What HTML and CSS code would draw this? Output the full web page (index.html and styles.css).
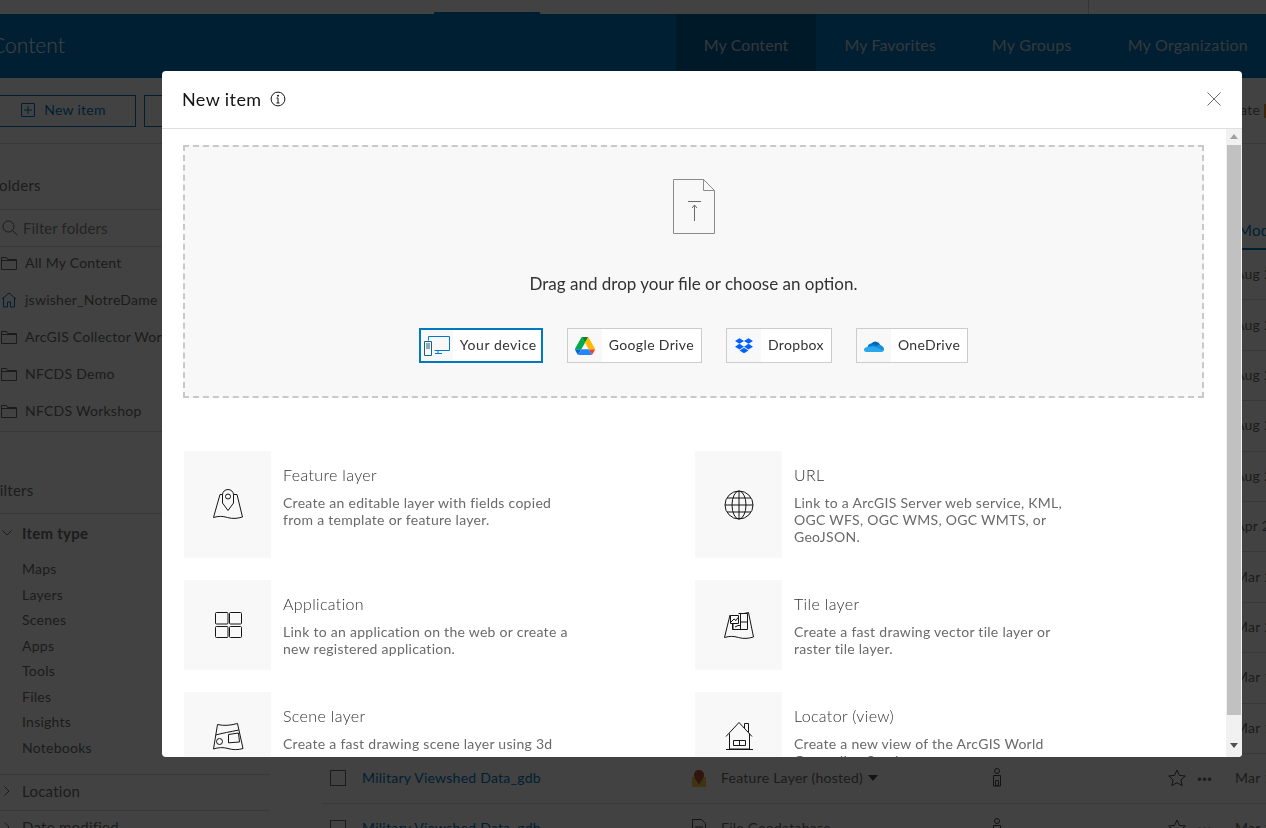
FILE: index.html
```html
<!DOCTYPE html>
<html>
  <head>
    <title>New item</title>
    <link rel="stylesheet" href="styles.css">
  </head>
  <body>
    <div class="page">
      <div class="topbar"><span class="topbar-tab"></span><span class="topbar-line"></span></div>

      <div class="band">
        <div class="band-title">Content</div>
        <div class="band-tabs">
          <span class="band-tab active tight">My Content</span>
          <span class="band-tab tight">My Favorites</span>
          <span class="band-tab">My Groups</span>
          <span class="band-tab">My Organization</span>
        </div>
      </div>

      <div class="toolbar">
        <div class="tool-btn">
          <svg width="14" height="14" viewBox="0 0 14 14" fill="none" stroke="#007ac2"><path d="M.5.5h13v13H.5zM7 3v8M3 7h8"/></svg>
          New item
        </div>
        <div class="tool-btn second"></div>
        <div class="tool-right">Update <span class="orange"></span></div>
      </div>

      <div class="main">
        <div class="sidebar">
          <div class="side-head">Folders</div>
          <div class="side-filter">
            <svg width="16" height="16" viewBox="0 0 16 16" fill="none" stroke="#6a6a6a"><circle cx="6.500" cy="6.500" r="5.500"/><path d="M10.500 10.500l5 5"/></svg>
            Filter folders
          </div>
          <div class="folders">
            <div class="folder"><svg class="folder-icon" width="16" height="14" viewBox="0 0 16 14" fill="none" stroke="#6a6a6a"><path d="M.5 13.500v-12h5l1 2h9v10zM.5 4.500h15"/></svg>All My Content</div>
            <div class="folder"><svg class="folder-icon" width="16" height="16" viewBox="0 0 16 16" fill="none" stroke="#007ac2"><path d="M1 7l7-6 7 6M2.500 6v9h4v-5h3v5h4V6"/></svg>jswisher_NotreDame</div>
            <div class="folder"><svg class="folder-icon" width="16" height="14" viewBox="0 0 16 14" fill="none" stroke="#6a6a6a"><path d="M.5 13.500v-12h5l1 2h9v10zM.5 4.500h15"/></svg>ArcGIS Collector Workshop</div>
            <div class="folder"><svg class="folder-icon" width="16" height="14" viewBox="0 0 16 14" fill="none" stroke="#6a6a6a"><path d="M.5 13.500v-12h5l1 2h9v10zM.5 4.500h15"/></svg>NFCDS Demo</div>
            <div class="folder"><svg class="folder-icon" width="16" height="14" viewBox="0 0 16 14" fill="none" stroke="#6a6a6a"><path d="M.5 13.500v-12h5l1 2h9v10zM.5 4.500h15"/></svg>NFCDS Workshop</div>
          </div>
          <div class="side-head filters">Filters</div>
          <div class="filter-group">
            <div class="filter-title"><svg width="10" height="6" viewBox="0 0 10 6" fill="none" stroke="#6a6a6a"><path d="M.5.500L5 5 9.500.5"/></svg>Item type</div>
            <div class="filter-item">Maps</div>
            <div class="filter-item">Layers</div>
            <div class="filter-item">Scenes</div>
            <div class="filter-item">Apps</div>
            <div class="filter-item">Tools</div>
            <div class="filter-item">Files</div>
            <div class="filter-item">Insights</div>
            <div class="filter-item">Notebooks</div>
          </div>
          <div class="filter-closed"><svg width="6" height="10" viewBox="0 0 6 10" fill="none" stroke="#6a6a6a"><path d="M.5.500L5 5 .5 9.500"/></svg>Location</div>
          <div class="filter-closed"><svg width="6" height="10" viewBox="0 0 6 10" fill="none" stroke="#6a6a6a"><path d="M.5.500L5 5 .5 9.500"/></svg>Date modified</div>
        </div>

        <div class="table">
          <div class="table-head"><span class="date sorted">Modified</span></div>
          <div class="row"><span class="date">Aug 2</span></div>
          <div class="row"><span class="date">Aug 2</span></div>
          <div class="row"><span class="date">Aug 2</span></div>
          <div class="row"><span class="date">Aug 2</span></div>
          <div class="row"><span class="date">Aug 2</span></div>
          <div class="row"><span class="date">Apr 2</span></div>
          <div class="row"><span class="date">Mar 2</span></div>
          <div class="row"><span class="date">Mar 2</span></div>
          <div class="row"><span class="date">Mar 1</span></div>
          <div class="row"><span class="date">Mar 1</span></div>
          <div class="row">
            <span class="check"></span>
            <a class="row-name">Military Viewshed Data_gdb</a>
            <span class="row-type">
              <svg width="16" height="18" viewBox="0 0 16 18"><path d="M1 8h14v10H1z" fill="#f4c542"/><path d="M8 1c3 0 5 2 5 5 0 3-3 6-5 10-2-4-5-7-5-10 0-3 2-5 5-5z" fill="#b5553a"/></svg>
              Feature Layer (hosted) <i class="caret"></i>
            </span>
            <svg class="owner" width="12" height="20" viewBox="0 0 12 20" fill="none" stroke="#4a4a4a"><circle cx="6" cy="3" r="2.500"/><path d="M2.500 7.500h7V18h-7z"/><path d="M4.500 12.500h3v5h-3z"/></svg>
            <svg class="star" width="18" height="18" viewBox="0 0 18 18" fill="none" stroke="#4a4a4a"><path d="M9 1l2.400 5.400 5.900.6-4.400 3.900 1.300 5.800L9 13.700l-5.200 3 1.300-5.800L.7 7l5.900-.6z"/></svg>
            <span class="dots">&middot;&middot;&middot;</span>
            <span class="date">Mar 1</span>
          </div>
          <div class="row">
            <span class="check"></span>
            <a class="row-name">Military Viewshed Data_gdb</a>
            <span class="row-type">
              <svg width="16" height="18" viewBox="0 0 16 18" fill="none" stroke="#4a4a4a"><path d="M1.500.5h9l4 4v13h-13zM4 8h8M4 11h8M4 14h8"/></svg>
              File Geodatabase
            </span>
            <svg class="owner" width="12" height="20" viewBox="0 0 12 20" fill="none" stroke="#4a4a4a"><circle cx="6" cy="3" r="2.500"/><path d="M2.500 7.500h7V18h-7z"/></svg>
            <svg class="star" width="18" height="18" viewBox="0 0 18 18" fill="none" stroke="#4a4a4a"><path d="M9 1l2.400 5.400 5.900.6-4.400 3.900 1.300 5.800L9 13.700l-5.200 3 1.300-5.800L.7 7l5.900-.6z"/></svg>
            <span class="dots">&middot;&middot;&middot;</span>
            <span class="date">Mar 1</span>
          </div>
        </div>
      </div>
    </div>

    <div class="scrim"></div>

    <div class="modal">
      <div class="modal-head">
        <span class="modal-title">New item</span>
        <svg class="info" width="16" height="16" viewBox="0 0 16 16" fill="none" stroke="#151515"><circle cx="8" cy="8" r="6.900"/><path d="M8 7v5M6.500 7H8M6.500 12h3"/><circle cx="8" cy="4.700" r=".6" fill="#151515"/></svg>
        <svg class="close" width="14" height="14" viewBox="0 0 14 14" fill="none" stroke="#6a6a6a"><path d="M.5.500l13 13M13.500.5l-13 13"/></svg>
      </div>
      <div class="modal-body">
        <div class="modal-scroll">
          <div class="dropzone">
            <svg class="file-icon" width="42" height="55" viewBox="0 0 42 55" fill="none" stroke="#8a8a8a"><path d="M.5.500h30l11 11v43H.5zM30.500.5v11h11"/><path d="M15 22.500h13M21.500 26v16M19 29l2.500-3 2.500 3" stroke="#6a6a6a"/></svg>
            <div class="drop-text">Drag and drop your file or choose an option.</div>
            <div class="sources">
              <div class="source selected">
                <span class="source-icon">
                  <svg width="26" height="20" viewBox="0 0 26 20" fill="none" stroke="#007ac2"><path d="M4.500 4.500v-4h21v14h-15M14 14.500v3M11 17.500h7"/><path d="M.5 5.500h7v14h-7zM2 8h4M2 10h4M2 12h4" stroke="#1a5f8a"/></svg>
                </span>
                <span class="source-name">Your device</span>
              </div>
              <div class="source">
                <span class="source-icon">
                  <svg width="20" height="18" viewBox="0 0 87.300 78"><path d="M6.600 66.850l3.850 6.650c.8 1.400 1.950 2.500 3.300 3.300L27.500 53H0c0 1.550.4 3.100 1.200 4.500z" fill="#0066da"/><path d="M43.650 25L29.900 1.200c-1.350.8-2.500 1.900-3.300 3.300L1.200 48.500A9.060 9.060 0 0 0 0 53h27.500z" fill="#00ac47"/><path d="M73.550 76.800c1.350-.8 2.500-1.900 3.300-3.300l1.600-2.750 7.650-13.250c.8-1.400 1.200-2.950 1.200-4.500H59.800l5.850 11.500z" fill="#ea4335"/><path d="M43.650 25L57.400 1.200C56.050.4 54.500 0 52.900 0H34.400c-1.600 0-3.150.45-4.500 1.200z" fill="#00832d"/><path d="M59.800 53H27.500L13.750 76.800c1.350.8 2.900 1.200 4.500 1.200h50.800c1.600 0 3.150-.45 4.500-1.200z" fill="#2684fc"/><path d="M73.400 26.500l-12.700-22c-.8-1.400-1.950-2.500-3.300-3.300L43.650 25 59.800 53h27.450c0-1.550-.4-3.100-1.200-4.500z" fill="#ffba00"/></svg>
                </span>
                <span class="source-name">Google Drive</span>
              </div>
              <div class="source">
                <span class="source-icon">
                  <svg width="18" height="16" viewBox="0 0 24 21" fill="#0061ff"><path d="M6 0l6 3.800-6 3.800-6-3.800zM18 0l6 3.800-6 3.800-6-3.800zM0 11.400l6-3.800 6 3.800-6 3.800zM18 7.600l6 3.800-6 3.800-6-3.800zM6 16.500l6-3.800 6 3.800-6 3.800z"/></svg>
                </span>
                <span class="source-name">Dropbox</span>
              </div>
              <div class="source">
                <span class="source-icon">
                  <svg width="20" height="13" viewBox="0 0 20 13"><path d="M7.500 4.500a5 5 0 0 1 8.700 1.500L11 12 5 7z" fill="#0364b8"/><path d="M7.500 4.500A4 4 0 0 0 3.600 8L9 13l6-6z" fill="#0078d4"/><path d="M14 5.800c1-.2 2-.1 2.800.4 2 .7 3.200 2.300 3.200 4 0 .7-.2 1.300-.5 1.800L11 9z" fill="#1490df"/><path d="M3.600 8C1.500 8 0 9.200 0 10.700 0 12 1 13 2.500 13H17c1.200 0 2-.4 2.500-1L10 7z" fill="#28a8ea"/></svg>
                </span>
                <span class="source-name">OneDrive</span>
              </div>
            </div>
          </div>

          <div class="item-grid">
            <div class="item">
              <div class="item-tile">
                <svg width="32" height="32" viewBox="0 0 32 32" fill="none" stroke="#151515"><path d="M10.500 5.500H8L1.500 28.500c5-1.500 9-1.500 14 0s10 1 15-.5L25 5.500h-3.500"/><path d="M16 .5c-3 0-5.500 2.300-5.500 5v8.500l5.500 7.500 5.500-7.500V5.500c0-2.700-2.500-5-5.500-5z"/><circle cx="16" cy="7.500" r="2.500"/></svg>
              </div>
              <div class="item-text">
                <div class="item-title">Feature layer</div>
                <div class="item-desc">Create an editable layer with fields copied from a template or feature layer.</div>
              </div>
            </div>
            <div class="item">
              <div class="item-tile">
                <svg width="32" height="32" viewBox="0 0 32 32" fill="none" stroke="#151515"><circle cx="16" cy="16" r="14"/><ellipse cx="16" cy="16" rx="7" ry="14"/><path d="M16 2v28M2 16h28M4 9h24M4 23h24"/></svg>
              </div>
              <div class="item-text">
                <div class="item-title">URL</div>
                <div class="item-desc">Link to a ArcGIS Server web service, KML, OGC WFS, OGC WMS, OGC WMTS, or GeoJSON.</div>
              </div>
            </div>
            <div class="item">
              <div class="item-tile">
                <svg width="32" height="32" viewBox="0 0 32 32" fill="none" stroke="#151515"><rect x="3.500" y="3.500" width="12.500" height="11.500" rx="1"/><rect x="17.500" y="3.500" width="12" height="11.500" rx="1"/><rect x="3.500" y="17.500" width="12.500" height="11" rx="1"/><rect x="17.500" y="17.500" width="12" height="11" rx="1"/></svg>
              </div>
              <div class="item-text">
                <div class="item-title">Application</div>
                <div class="item-desc">Link to an application on the web or create a new registered application.</div>
              </div>
            </div>
            <div class="item">
              <div class="item-tile">
                <svg width="32" height="32" viewBox="0 0 32 32" fill="none" stroke="#151515"><path d="M7 6L1.500 28.500c5-1.500 9-1.500 14 0s10 1 15-.5L25.500 3.500 21 4.500"/><path d="M7.500 6.500h8v8h-8zM8 13l3-3 2 1.500 2-3M15.500 4.500h9v16h-15v-6M17.500 5v15M10 14.500v6M17.500 13h7M12 18l3-1.500h2"/></svg>
              </div>
              <div class="item-text">
                <div class="item-title">Tile layer</div>
                <div class="item-desc">Create a fast drawing vector tile layer or raster tile layer.</div>
              </div>
            </div>
            <div class="item">
              <div class="item-tile">
                <svg width="32" height="32" viewBox="0 0 32 32" fill="none" stroke="#151515"><path d="M5.500 3.500c7 1.500 12 1 20-1L31 27.500c-5 1.500-10 1.500-15 0s-10-1-14.500.5z"/><path d="M3.700 14c7-2 14-3 23-5"/><circle cx="7.500" cy="20.500" r="3"/><path d="M16.500 13.500l10-1.500 1 9-11 .8z"/></svg>
              </div>
              <div class="item-text">
                <div class="item-title">Scene layer</div>
                <div class="item-desc">Create a fast drawing scene layer using 3d content.</div>
              </div>
            </div>
            <div class="item">
              <div class="item-tile">
                <svg width="32" height="32" viewBox="0 0 32 32" fill="none" stroke="#151515"><path d="M3 15.500L16 1.500l13 14M6.500 12.500v15.500h20V12.500M21.500 7V2.500h4v9M3 28.500h27M10.500 19.500h12v5h-12zM16.500 19.500v5"/></svg>
              </div>
              <div class="item-text">
                <div class="item-title">Locator (view)</div>
                <div class="item-desc">Create a new view of the ArcGIS World Geocoding Service.</div>
              </div>
            </div>
          </div>
        </div>
        <div class="scrollbar">
          <i class="arrow up"></i>
          <div class="thumb"></div>
          <i class="arrow down"></i>
        </div>
      </div>
    </div>
  </body>
</html>
```

FILE: styles.css
```css
html, body {
    margin: 0;
    padding: 0;
    height: 100%;
    overflow: hidden;
}

body {
    font-family: "Lato", "Open Sans", sans-serif;
    font-size: 14px;
    letter-spacing: .25px;
    color: #4a4a4a;
    background: #fff;
}

/* the app behind the dialog sits scrolled 9px to the left */
.page {
    width: 1300px;
    height: 828px;
    margin-left: -9px;
    overflow: hidden;
    color: #6e6e6e;
}

.topbar {
    height: 14px;
    display: flex;
    justify-content: flex-end;
}

.topbar-tab {
    width: 106px;
    height: 2px;
    margin: 12px 548px 0 0;
    background: #007ac2;
}

.topbar-line {
    width: 1px;
    margin-right: 202px;
    background: #ccc;
}

.band {
    height: 64px;
    padding: 0 15px 0 0;
    display: flex;
    justify-content: space-between;
    background: #007ac2;
    color: #fff;
}

.band-title {
    font-size: 21px;
    font-weight: 300;
    letter-spacing: 0;
    line-height: 62px;
}

.band-tabs {
    display: flex;
}

.band-tab {
    padding: 0 28px;
    font-size: 16px;
    line-height: 62px;
    color: #c8d6df;
}

.band-tab.tight {
    letter-spacing: .1px;
}

.band-tab.active {
    background: #00619b;
}

.toolbar {
    height: 66px;
    padding-top: 17px;
    box-sizing: border-box;
    display: flex;
    gap: 8px;
    border-bottom: 1px solid #ddd;
}

.tool-btn {
    width: 145px;
    height: 32px;
    padding-bottom: 3px;
    box-sizing: border-box;
    display: flex;
    align-items: center;
    justify-content: center;
    gap: 9px;
    border: 1px solid #007ac2;
    color: #007ac2;
}

.tool-btn.second {
    width: 60px;
}

.tool-right {
    margin: 0 21px 0 auto;
    line-height: 30px;
}

.orange {
    display: inline-block;
    width: 6px;
    height: 14px;
    vertical-align: middle;
    background: #e8912d;
}

.main {
    display: flex;
}

.sidebar {
    width: 279px;
    margin-right: 52px;
    flex: none;
}

.side-head {
    height: 66px;
    line-height: 82px;
    font-size: 15px;
    border-bottom: 1px solid #ddd;
    box-sizing: border-box;
}

.side-filter {
    height: 35px;
    padding: 0 0 1px 11px;
    box-sizing: content-box;
    display: flex;
    align-items: center;
    gap: 5px;
    font-size: 15px;
    letter-spacing: .1px;
    color: #8a8a8a;
    border-bottom: 1px solid #ddd;
    margin-bottom: -1px;
}

.folders {
    border-bottom: 1px solid #ddd;
}

.folder {
    height: 37px;
    padding: 0 0 4px 10px;
    box-sizing: border-box;
    display: flex;
    align-items: center;
    gap: 8px;
    white-space: nowrap;
}

.side-head.filters {
    height: 82px;
    line-height: 116px;
}

.filter-group {
    padding-bottom: 14px;
    border-bottom: 1px solid #ddd;
}

.filter-title {
    height: 38px;
    margin-bottom: 4px;
    padding-left: 11px;
    display: flex;
    align-items: center;
    gap: 10px;
    font-size: 15px;
    font-weight: 700;
}

.filter-item {
    padding-left: 31px;
    line-height: 25.500px;
}

.filter-closed {
    height: 36px;
    padding: 0 0 3px 13px;
    box-sizing: border-box;
    display: flex;
    align-items: center;
    gap: 12px;
    font-size: 15px;
    border-bottom: 1px solid #ddd;
}

.table {
    flex: 1;
    min-width: 0;
}

.table-head {
    height: 106px;
    padding-left: 912px;
    box-sizing: border-box;
    line-height: 172px;
    font-size: 15px;
    color: #007ac2;
}

.sorted {
    display: block;
    height: 106px;
    margin-left: 4px;
    border-bottom: 2px solid #007ac2;
    box-sizing: border-box;
    white-space: nowrap;
    overflow: hidden;
}

.row {
    height: 50.400px;
    box-sizing: border-box;
    display: flex;
    align-items: center;
    border-bottom: 1px solid #ddd;
    padding: 0 0 2px 8px;
}

.row .date {
    margin-left: auto;
    margin-right: 22px;
    width: 34px;
    white-space: nowrap;
}

.check {
    width: 14px;
    height: 14px;
    border: 1px solid #6a6a6a;
    margin-right: 16px;
    flex: none;
}

.row-name {
    width: 329px;
    color: #007ac2;
    flex: none;
}

.row-type {
    width: 300px;
    display: flex;
    align-items: center;
    gap: 14px;
    flex: none;
    white-space: nowrap;
}

.caret {
    display: inline-block;
    margin-left: -9px;
    border: 5px solid transparent;
    border-top: 6px solid #4a4a4a;
    border-bottom: 0;
}

.owner {
    flex: none;
}

.star {
    margin-left: 165px;
    flex: none;
}

.dots {
    margin-left: 11px;
    font-size: 18px;
    font-weight: 700;
    letter-spacing: 0;
}

.scrim {
    position: fixed;
    inset: 0;
    background: rgba(0, 0, 0, .74);
}

.modal {
    position: fixed;
    left: 162px;
    top: 71px;
    width: 1080px;
    height: 686px;
    display: flex;
    flex-direction: column;
    background: #fff;
    border-radius: 4px;
    overflow: hidden;
}

.modal-head {
    height: 58px;
    padding: 0 21px 2px 20px;
    box-sizing: border-box;
    display: flex;
    align-items: center;
    flex: none;
    border-bottom: 1px solid #dfdfdf;
}

.modal-title {
    font-size: 18px;
    letter-spacing: .4px;
    color: #151515;
}

.info {
    margin-left: 8px;
}

.close {
    margin-left: auto;
}

.modal-body {
    flex: 1;
    min-height: 0;
    display: flex;
}

.modal-scroll {
    flex: 1;
    min-width: 0;
    padding: 16px 0 0 21px;
    overflow: hidden;
}

.dropzone {
    width: 1021px;
    height: 253px;
    box-sizing: border-box;
    padding-top: 32px;
    display: flex;
    flex-direction: column;
    align-items: center;
    background: #f8f8f8;
    border: 2px dashed #c9c9c9;
}

.file-icon {
    display: block;
}

.drop-text {
    margin-top: 39px;
    font-size: 17px;
    letter-spacing: 0;
    line-height: 22px;
    color: #323232;
}

.sources {
    margin-top: 33px;
    display: flex;
    gap: 24px;
}

.source {
    height: 35px;
    box-sizing: border-box;
    display: flex;
    align-items: center;
    background: #fff;
    border: 1px solid #ccc;
}

.source.selected {
    width: 124px;
    border: 2px solid #0079c1;
}

.source-icon {
    width: 34px;
    height: 100%;
    display: flex;
    align-items: center;
    justify-content: center;
    flex: none;
    background: #f8f8f8;
}

.source.selected .source-icon {
    width: 32px;
}

.source-name {
    padding: 0 7px 3px 7px;
    letter-spacing: .35px;
    color: #323232;
    white-space: nowrap;
}

.source.selected .source-name {
    padding-right: 0;
    letter-spacing: .55px;
}

.item-grid {
    margin: 53px 0 0 1px;
    display: grid;
    grid-template-columns: 511px 511px;
    row-gap: 22px;
}

.item {
    display: flex;
    gap: 12px;
}

.item-tile {
    width: 87px;
    display: flex;
    align-items: center;
    justify-content: center;
    background: #f8f8f8;
    flex: none;
}

.item-text {
    width: 290px;
    padding: 12px 0 13px;
}

.item-title {
    font-size: 16px;
    font-weight: 300;
    letter-spacing: .35px;
    line-height: 24px;
    margin-bottom: 7px;
    color: #323232;
}

.item-desc {
    line-height: 17px;
    letter-spacing: .28px;
    color: #6a6a6a;
}

.scrollbar {
    width: 16px;
    display: flex;
    flex-direction: column;
    align-items: center;
    flex: none;
    background: #f1f1f1;
}

.arrow {
    width: 0;
    height: 0;
    margin: 5px 0 6px;
    border: 4px solid transparent;
}

.arrow.up {
    border-top: 0;
    border-bottom: 5px solid #a0a0a0;
}

.arrow.down {
    margin-top: 28px;
    border-bottom: 0;
    border-top: 5px solid #505050;
}

.thumb {
    width: 14px;
    height: 570px;
    background: #c1c1c1;
}
```
